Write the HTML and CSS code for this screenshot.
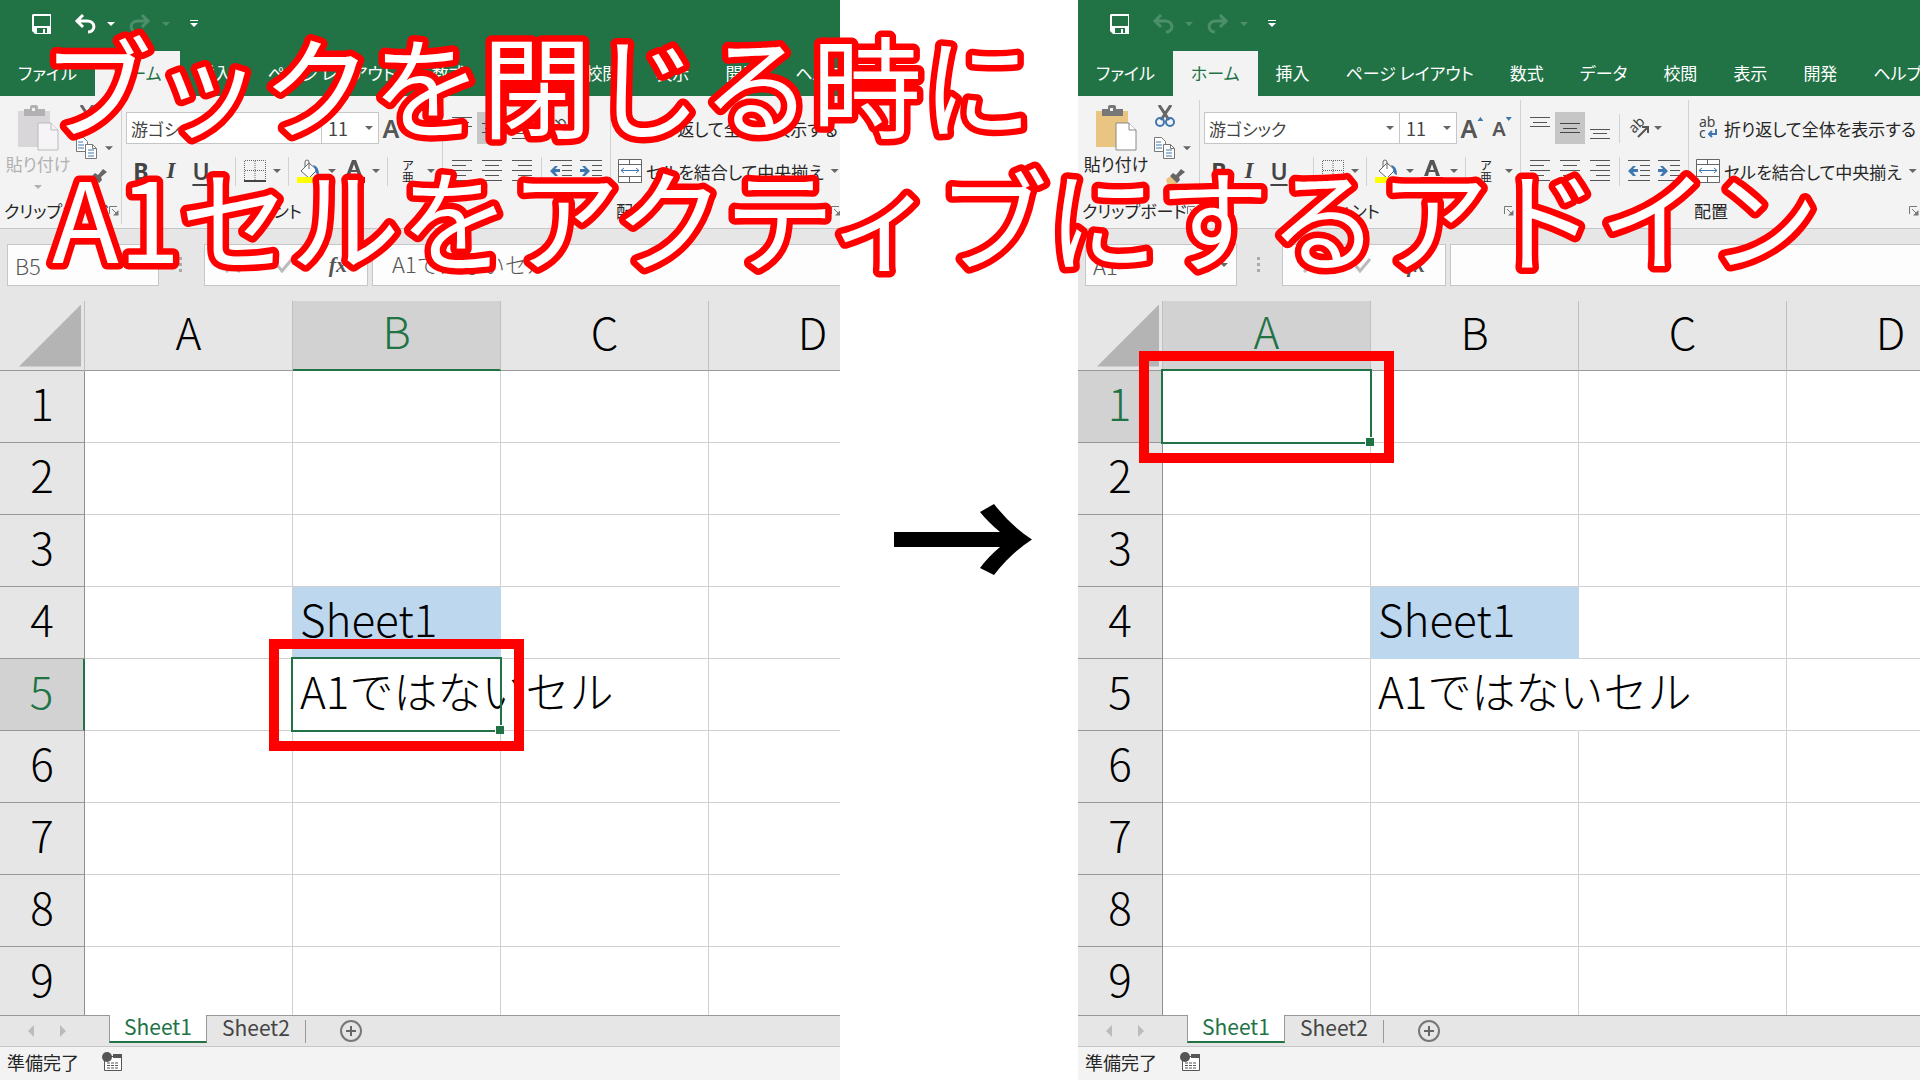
FILE: index.html
```html
<!DOCTYPE html>
<html lang="ja">
<head>
  <meta charset="UTF-8" />
  <meta name="viewport" content="width=device-width, initial-scale=1.0"/>
  <title>A1セルをアクティブにするアドイン</title>
  <link rel="stylesheet" href="styles.css">
</head>
<body>
  <svg class="sprite" aria-hidden="true">
    <symbol id="save" viewBox="0 0 20 20"><path d="M1 0h18v20H3l-3-3V1z" fill="currentColor"/><path d="M2 2h16v10H2zM5 14h10v5h-2v-4h-2v4H5z" fill="#217346"/></symbol>
    <symbol id="undo" viewBox="0 0 22 20"><path d="M2 7h11c9 0 9 11 1 11M9 1L3 7l6 6" fill="none" stroke="currentColor" stroke-width="3"/></symbol>
    <symbol id="redo" viewBox="0 0 22 20"><path d="M20 7H9c-9 0-9 11-1 11M13 1l6 6-6 6" fill="none" stroke="currentColor" stroke-width="3"/></symbol>
    <symbol id="custom" viewBox="0 0 8 8"><path d="M0 0h8v1H0zM0 3h8L4 7z" fill="currentColor"/></symbol>
    <symbol id="paste" viewBox="0 0 42 46"><path class="board" d="M1 6h32v36H1z"/><path class="clip" d="M7 4h6V2q0-2 2-2h4q2 0 2 2v2h7v7H7z"/><path d="M15 3h3v3h-3z" fill="#f3f3f3"/><path class="sheet" d="M21 18h13l7 7v20H21z"/><path class="sheet" d="M34 18v7h7"/></symbol>
    <symbol id="cut" viewBox="0 0 20 22"><path d="M4 0l10 15M16 0L6 15" stroke="#666" stroke-width="3" fill="none"/><g class="rings" fill="none" stroke-width="2"><circle cx="5" cy="17" r="4"/><circle cx="15" cy="17" r="4"/></g></symbol>
    <symbol id="copy" viewBox="0 0 21 22"><g fill="#fff" stroke="#777"><path d="M.5.5h7l4 4v10H.5z"/><path d="M9.5 7.500h7l4 4v10h-11z"/><path d="M16.500 7.500v4h4" fill="none"/></g><path d="M2 5h5M2 8h6M2 11h6M12 13h6M12 16h6M12 19h6" stroke="#3e76b0"/></symbol>
    <symbol id="painter" viewBox="0 0 20 20"><path class="bristle" d="M1 10l5-3 6 7-4 6-5-2z"/><path d="M5 7l3-3 3 2 5-6 4 3-6 5 1 3-3 3z" fill="#666"/></symbol>
    <symbol id="borders" viewBox="0 0 22 22"><path d="M.5 20V.5h21V20M11 1v19M1 10.500h20" fill="none" stroke="#666" stroke-dasharray="1 1"/><path d="M0 21h22" stroke="#444" stroke-width="2"/></symbol>
    <symbol id="fill" viewBox="0 0 24 24"><path d="M4 12l8-8 8 7-8 8z" fill="#fff" stroke="#666"/><path d="M8 8V3q0-2 2-2t2 2v7" fill="none" stroke="#666"/><path d="M16 6q6 1 6 10-4-1-4-6z" fill="#3e76b0"/><path d="M0 18h24v6H0z" fill="#ff0"/></symbol>
    <symbol id="color" viewBox="0 0 22 24"><path d="M9 1h4l6 16h-4l-1-4H8l-1 4H3zM11 5l-2 6h4z" fill="#555" fill-rule="evenodd"/><path d="M0 18h22v6H0z" fill="#e00"/></symbol>
    <symbol id="top" viewBox="0 0 20 22"><path d="M0 .5h20M3 5.500h14M0 9.500h20" stroke="#555"/></symbol>
    <symbol id="middle" viewBox="0 0 20 22"><path d="M0 6.500h20M3 11.500h14M0 15.500h20" stroke="#444"/></symbol>
    <symbol id="bottom" viewBox="0 0 20 22"><path d="M0 12.500h20M3 16.500h14M0 21.500h20" stroke="#555"/></symbol>
    <symbol id="left" viewBox="0 0 20 22"><path d="M0 .5h20M0 5.500h14M0 10.500h20M0 15.500h14M0 20.500h20" stroke="#555"/></symbol>
    <symbol id="center" viewBox="0 0 20 22"><path d="M0 .5h20M3 5.500h14M0 10.500h20M3 15.500h14M0 20.500h20" stroke="#555"/></symbol>
    <symbol id="right" viewBox="0 0 20 22"><path d="M0 .5h20M6 5.500h14M0 10.500h20M6 15.500h14M0 20.500h20" stroke="#555"/></symbol>
    <symbol id="outdent" viewBox="0 0 22 22"><path d="M0 .5h22M12 5.500h10M12 10.500h10M12 15.500h10M0 20.500h22" stroke="#555"/><path d="M0 11l5-5h3L5 9h5v3H5l3 4H5z" fill="#3e76b0"/></symbol>
    <symbol id="indent" viewBox="0 0 22 22"><path d="M0 .5h22M12 5.500h10M12 10.500h10M12 15.500h10M0 20.500h22" stroke="#555"/><path d="M10 11L5 6H2l3 3H0v3h5l-3 4h3z" fill="#3e76b0"/></symbol>
    <symbol id="orient" viewBox="0 0 22 22"><text x="0" y="0" transform="translate(6 17) rotate(-45)" class="icon-text">ab</text><path d="M10 20l9-9M14 10h6v6" fill="none" stroke="#555" stroke-width="2"/></symbol>
    <symbol id="wrap" viewBox="0 0 18 24"><text x="0" y="11" class="icon-text">ab</text><text x="0" y="22" class="icon-text">c</text><path d="M17 13v5h-6M13 15l-3 3 3 3" fill="none" stroke="#3e76b0" stroke-width="2"/></symbol>
    <symbol id="merge" viewBox="0 0 24 24"><path d="M.5.5h23v23H.5zM.5 5.500h23M.5 17.500h23M11.500 1v4M11.500 18v5" fill="#fff" stroke="#666"/><path d="M3 11.500h18M6 9l-3 2.500L6 14M18 9l3 2.500-3 2.500" fill="none" stroke="#3e76b0"/></symbol>
    <symbol id="launch" viewBox="0 0 10 10"><path d="M.5 8V.5H8M3 3l5 5" fill="none" stroke="#777"/><path d="M9.500 4v5.500H4z" fill="#777"/></symbol>
    <symbol id="record" viewBox="0 0 21 20"><path d="M2.500 4.500h17v14h-17z" fill="#fff" stroke="#555"/><path d="M11 2h9v4h-9z" fill="#555"/><circle cx="5" cy="5" r="5" fill="#555"/><path d="M5 11h12M5 13.500h12M5 16h12" stroke="#555" stroke-dasharray="3 1"/></symbol>
    <symbol id="cancel" viewBox="0 0 16 16"><path d="M1 1l14 14M15 1L1 15" stroke="#bbb" stroke-width="3"/></symbol>
    <symbol id="enter" viewBox="0 0 16 16"><path d="M1 9l4 5L15 2" fill="none" stroke="#bbb" stroke-width="3"/></symbol>
    <symbol id="plus" viewBox="0 0 22 22"><circle cx="11" cy="11" r="10" fill="none" stroke="#777" stroke-width="2"/><path d="M11 6v10M6 11h10" stroke="#666" stroke-width="2"/></symbol>
  </svg>

  <svg class="headline">
    <text x="42" y="130">ブックを閉じる時に</text>
    <text x="52" y="263">A1セルをアクティブにするアドイン</text>
  </svg>

  <main class="compare">
    <section class="book before" id="before"></section>
    <div class="arrow">
      <svg viewBox="0 0 138 72" role="img" aria-label="→"><path d="M0 28h106Q94 18 86 8L100 0q17 22 38 35.500Q117 49 100 71L86 64q8-11 20-21H0z"/></svg>
    </div>
    <section class="book after" id="after"></section>
  </main>

  <script src="script.js"></script>
</body>
</html>
```

FILE: styles.css
```css
* {
  box-sizing: border-box;
}
body {
  margin: 0;
  background: #fff;
  color: #262626;
  font-family: "Noto Sans CJK JP", "Noto Sans", sans-serif;
  font-size: 18px;
  overflow: hidden;
}
button, input, select {
  font: inherit;
  color: inherit;
  margin: 0;
  padding: 0;
  border: none;
  border-radius: 0;
  background: none;
  appearance: none;
}
button {
  display: flex;
  align-items: center;
  justify-content: center;
  flex: none;
}
svg {
  display: block;
  flex: none;
}
.sprite {
  position: absolute;
  width: 0;
  height: 0;
}
.icon-text {
  font-family: "Noto Sans", sans-serif;
  font-size: 14px;
  fill: #444;
}

/* headline over both windows */
.headline {
  position: absolute;
  z-index: 5;
  top: 0;
  left: 0;
  width: 100%;
  height: 300px;
  pointer-events: none;
}
.headline text {
  font-size: 110px;
  font-weight: 400;
  fill: #fff;
  stroke: #f00;
  stroke-width: 13px;
  stroke-linejoin: round;
  paint-order: stroke fill;
}

.compare {
  display: grid;
  grid-template-columns: 840fr 238fr 842fr;
  height: 100vh;
}
.arrow {
  display: flex;
  align-items: center;
  justify-content: center;
  padding-left: 8px;
}
.arrow svg {
  width: 60%;
}
.book {
  --board: #eac581;
  --clip: #777;
  --sheet: #fff;
  --sheet-line: #888;
  --rings: #3e76b0;
  --paste-text: #262626;
  display: flex;
  flex-direction: column;
  min-width: 0;
  overflow: hidden;
  background: #e6e6e6;
}
.before {
  --board: #d8d6d8;
  --clip: #b1b1b1;
  --sheet: #f6f4f6;
  --sheet-line: #bbb;
  --rings: #999;
  --paste-text: #b1b1b1;
}

/* title bar and tabs */
.quick {
  display: flex;
  align-items: center;
  flex: none;
  height: 51px;
  padding: 0 32px;
  padding-bottom: 3px;
  background: #217346;
  color: #fff;
}
.quick button {
  margin-right: 11px;
}
.quick .save {
  margin-right: 22px;
}
.quick .drop {
  margin-right: 14px;
}
.quick .custom {
  margin-left: 6px;
}
.quick button:disabled {
  color: #4d8f6b;
}
.tabs {
  display: flex;
  flex: none;
  height: 45px;
  background: #217346;
  color: #fff;
  font-size: 17px;
  font-feature-settings: "palt";
}
.tabs button {
  padding: 0 18px 2px;
  white-space: nowrap;
}
.tabs .active {
  background: #f3f3f3;
  color: #217346;
}

/* ribbon */
.ribbon {
  display: flex;
  flex: none;
  height: 133px;
  padding: 4px 0 0;
  background: #f3f3f3;
  border-bottom: 1px solid #c6c6c6;
  font-size: 17px;
  font-feature-settings: "palt";
}
.group {
  display: flex;
  flex-direction: column;
  flex: none;
  margin-bottom: 4px;
  border-right: 1px solid #d2d2d2;
}
.clipboard {
  width: 122px;
}
.font {
  width: 321px;
}
.align {
  width: 410px;
}
.tools {
  display: flex;
  height: 102px;
}
.paste {
  flex-direction: column;
  justify-content: flex-start;
  width: 72px;
  padding: 5px 0 0 4px;
  color: var(--paste-text);
  white-space: nowrap;
}
.paste .caret {
  margin-top: 8px;
  background: var(--paste-text);
}
.paste span {
  line-height: 26px;
}
.small-tools {
  display: flex;
  flex-direction: column;
  justify-content: space-between;
  padding: 5px 0 8px 4px;
}
.small-tools div {
  display: flex;
  align-items: center;
  gap: 8px;
}
.small-tools .cut {
  margin-right: 16px;
}
.small-tools .painter {
  margin-left: 4px;
}
.board,
.bristle {
  fill: var(--board);
}
.clip {
  fill: var(--clip);
}
.sheet {
  fill: var(--sheet);
  stroke: var(--sheet-line);
}
.rings {
  stroke: var(--rings);
}
.caret {
  width: 8px;
  height: 4px;
  flex: none;
  background: #666;
  clip-path: polygon(0 0, 100% 0, 50% 100%);
}
.quick .caret {
  background: currentColor;
}
.caption {
  display: flex;
  align-items: center;
  justify-content: space-between;
  height: 28px;
  padding: 0 6px 0 4px;
  white-space: nowrap;
}
.font .caption,
.align .caption {
  padding-left: 0;
}
.caption span {
  flex: 1;
}
.font .caption span,
.align .caption span {
  text-align: center;
}
.align .caption {
  padding-right: 11px;
}
.align .caption span {
  padding-right: 8px;
}
.rows {
  display: flex;
  flex-direction: column;
}
.row {
  display: flex;
  align-items: center;
  height: 48px;
  padding: 8px 0 0 4px;
}
.row + .row {
  height: 46px;
  padding-top: 0;
}
.row .caret {
  margin: 0 7px;
}
.picker {
  display: flex;
  align-items: center;
  height: 32px;
  background: #fff;
  border: 1px solid #c6c6c6;
  color: #444;
}
.picker + .picker {
  border-left: none;
}
.picker select {
  flex: 1;
  min-width: 0;
  height: 28px;
  padding-left: 4px;
}
.picker .caret {
  margin: 0 5px;
}
.picker-name {
  width: 196px;
}
.picker-size {
  width: 57px;
}
.picker-size select {
  padding-left: 6px;
  font-size: 18px;
}
.grow,
.shrink {
  width: 30px;
  font-family: "Noto Sans", sans-serif;
  font-weight: 600;
  color: #555;
}
.grow {
  font-size: 25px;
}
.shrink {
  font-size: 20px;
}
.grow::after,
.shrink::after {
  content: "";
  width: 6px;
  height: 4px;
  margin-bottom: 18px;
  background: #3e76b0;
  clip-path: polygon(50% 0, 100% 100%, 0 100%);
}
.shrink::after {
  clip-path: polygon(0 0, 100% 0, 50% 100%);
}
.style {
  width: 30px;
  font-family: "Noto Sans", sans-serif;
  font-size: 23px;
  font-weight: 700;
  color: #444;
}
.italic {
  font-family: "Liberation Serif", serif;
  font-style: italic;
}
.underline {
  font-weight: 600;
  text-decoration: underline;
  text-underline-offset: 4px;
  text-decoration-thickness: 2px;
}
.line {
  width: 1px;
  height: 29px;
  margin-right: 8px;
  background: #d2d2d2;
}
.underline + .line {
  margin-left: 19px;
}
.ruby {
  flex-direction: column;
  width: 24px;
  font-size: 12px;
  line-height: 12px;
}
.align .rows:first-child {
  width: 168px;
  border-right: 1px solid #d2d2d2;
}
.align .row button {
  width: 30px;
  height: 32px;
}
.align .line {
  margin: 0 4px;
}
.align .row .on {
  background: #c6c6c6;
}
.align .row .wide {
  width: auto;
  gap: 4px;
  padding-left: 3px;
  white-space: nowrap;
}
.align .row:first-child .wide svg {
  margin: 0 3px;
}
.align .rows:first-child .caret {
  margin: 0;
}

/* formula bar */
.formula {
  display: flex;
  flex: none;
  height: 72px;
  padding: 15px 0 15px 7px;
  color: #555;
  font-size: 22px;
  font-weight: 300;
}
.box {
  display: flex;
  align-items: center;
  background: #fdfdfd;
  border: 1px solid #c6c6c6;
}
.name {
  width: 152px;
}
.name input {
  flex: 1;
  min-width: 0;
  padding-left: 7px;
}
.name .caret {
  margin-right: 8px;
}
.grip {
  width: 3px;
  height: 15px;
  margin: 13px 22px 0 20px;
  background: repeating-linear-gradient(#aaa 0 3px, transparent 3px 6px);
}
.entry {
  justify-content: space-between;
  width: 164px;
  margin-right: 4px;
  padding: 0 20px;
}
.fx {
  font-family: "Liberation Serif", serif;
  font-style: italic;
  font-weight: 700;
}
.value {
  flex: 1;
  border-right: none;
}
.value input {
  width: 100%;
  padding: 0 0 5px 19px;
}

/* cells */
.sheet-area {
  flex: 1;
  min-height: 0;
  overflow: hidden;
}
.cells {
  width: 917px;
  table-layout: fixed;
  border-collapse: separate;
  border-spacing: 0;
  background: #fff;
  color: #000;
  font-size: 44px;
  font-weight: 300;
  line-height: 56px;
}
.cells th,
.cells td {
  height: 72px;
  padding: 0 0 10px;
  border-right: 1px solid #d0d0d0;
  border-bottom: 1px solid #d0d0d0;
  font-weight: 300;
}
.cells td {
  position: relative;
  padding-left: 7px;
  white-space: nowrap;
}
.cells th {
  width: 208px;
  background: #e6e6e6;
  border-color: #999;
}
.cells thead th {
  height: 70px;
  border-right-color: #c0c0c0;
}
.cells .corner {
  width: 85px;
  padding: 0;
}
.corner::after {
  content: "";
  display: block;
  width: 62px;
  height: 62px;
  margin-left: 19px;
  background: #b4b4b4;
  clip-path: polygon(100% 0, 100% 100%, 0 100%);
}
.cells tbody th {
  border-right-color: #8f8f8f;
}
.cells .picked {
  background: #d2d2d2;
  color: #217346;
}
.cells thead .picked {
  border-bottom: 2px solid #217346;
}
.cells tbody .picked {
  border-right: 2px solid #217346;
}
.cells .blue {
  background: #bdd7ee;
  border-color: #bdd7ee;
}
.cells .spill {
  border-right-color: transparent;
}
.cursor {
  position: absolute;
  z-index: 1;
  inset: -2px;
  border: 2px solid #217346;
}
.cursor::after {
  content: "";
  position: absolute;
  right: -4px;
  bottom: -4px;
  width: 8px;
  height: 8px;
  background: #217346;
  border: solid #fff;
  border-width: 1px 0 0 1px;
}
.mark {
  position: absolute;
  z-index: 2;
  inset: -20px -24px -21px -24px;
  border: 10px solid #f00;
}

/* sheet tabs and status bar */
.sheets {
  display: flex;
  flex: none;
  height: 32px;
  border-top: 1px solid #999;
  border-bottom: 1px solid #c6c6c6;
  color: #444;
  font-size: 21px;
}
.nav {
  width: 6px;
  height: 12px;
  margin: 9px 0 0 28px;
  background: #bbb;
  clip-path: polygon(100% 0, 100% 100%, 0 50%);
}
.nav.next {
  margin: 9px 43px 0 26px;
  clip-path: polygon(0 0, 100% 50%, 0 100%);
}
.sheets .tab {
  width: 98px;
  height: 27px;
  padding-bottom: 6px;
}
.sheets .current {
  margin-top: -1px;
  height: 28px;
  padding-bottom: 4px;
  background: #fff;
  border: 1px solid #999;
  border-top: none;
  border-bottom: 2px solid #217346;
  color: #217346;
}
.sheets .line {
  height: 23px;
  margin: 4px 34px 0 0;
  background: #999;
}
.status {
  display: flex;
  align-items: center;
  flex: none;
  gap: 23px;
  height: 33px;
  padding: 0 0 4px 7px;
  background: #f3f3f3;
}
```

FILE: script.js
```js
const icon = (id, w, h) => `<svg width="${w}" height="${h}"><use href="#${id}"/></svg>`;
const tool = (id, label, w, h, cls = "") => `<button type="button" class="${cls}" aria-label="${label}">${icon(id, w, h)}</button>`;
const caret = '<span class="caret"></span>';
const line = '<div class="line"></div>';
const launch = label => tool("launch", label, 10, 10);

function table(active) {
  const cols = ["A", "B", "C", "D"];
  const text = { B4: "Sheet1", B5: "A1ではないセル" };
  let html = '<table class="cells"><thead><tr><th class="corner"></th>';
  cols.forEach(c => {
    html += `<th class="${active[0] === c ? "picked" : ""}">${c}</th>`;
  });
  html += "</tr></thead><tbody>";
  for (let r = 1; r <= 9; r++) {
    html += `<tr><th class="${active[1] == r ? "picked" : ""}">${r}</th>`;
    cols.forEach(c => {
      const ref = c + r;
      const cls = ref === "B4" ? "blue" : ref === "B5" ? "spill" : "";
      const cursor = ref === active ? '<div class="cursor"></div><div class="mark"></div>' : "";
      html += `<td class="${cls}">${text[ref] || ""}${cursor}</td>`;
    });
    html += "</tr>";
  }
  return html + "</tbody></table>";
}

function book(active, value, undo) {
  const off = undo ? "" : "disabled";
  const tabs = ["ファイル", "ホーム", "挿入", "ページ レイアウト", "数式", "データ", "校閲", "表示", "開発", "ヘルプ"];
  return `
  <div class="quick">
    ${tool("save", "上書き保存", 20, 20, "save")}
    <button type="button" aria-label="元に戻す" ${off}>${icon("undo", 22, 20)}</button>
    <button type="button" class="drop" aria-label="元に戻す一覧" ${off}>${caret}</button>
    <button type="button" aria-label="やり直し" disabled>${icon("redo", 22, 20)}</button>
    <button type="button" class="drop" aria-label="やり直し一覧" disabled>${caret}</button>
    ${tool("custom", "カスタマイズ", 8, 8, "custom")}
  </div>
  <nav class="tabs">
    ${tabs.map(t => `<button type="button" class="${t === "ホーム" ? "active" : ""}">${t}</button>`).join("")}
  </nav>
  <div class="ribbon">
    <div class="group clipboard">
      <div class="tools">
        <button type="button" class="paste">${icon("paste", 42, 46)}<span>貼り付け</span>${caret}</button>
        <div class="small-tools">
          ${tool("cut", "切り取り", 20, 22, "cut")}
          <div>${tool("copy", "コピー", 21, 22)}${caret}</div>
          ${tool("painter", "書式のコピー", 20, 20, "painter")}
        </div>
      </div>
      <div class="caption"><span>クリップボード</span>${launch("クリップボード")}</div>
    </div>
    <div class="group font">
      <div class="tools"><div class="rows">
        <div class="row">
          <div class="picker picker-name"><select aria-label="フォント"><option>游ゴシック</option></select>${caret}</div>
          <div class="picker picker-size"><select aria-label="フォント サイズ"><option>11</option></select>${caret}</div>
          <button type="button" class="grow">A</button>
          <button type="button" class="shrink">A</button>
        </div>
        <div class="row">
          <button type="button" class="style">B</button>
          <button type="button" class="style italic">I</button>
          <button type="button" class="style underline">U</button>
          ${line}${tool("borders", "罫線", 22, 22)}${caret}
          ${line}${tool("fill", "塗りつぶしの色", 24, 24)}${caret}
          ${tool("color", "フォントの色", 22, 24)}${caret}
          ${line}<button type="button" class="ruby"><span>ア</span><span>亜</span></button>${caret}
        </div>
      </div></div>
      <div class="caption"><span>フォント</span>${launch("フォント")}</div>
    </div>
    <div class="group align">
      <div class="tools">
        <div class="rows">
          <div class="row">
            ${tool("top", "上揃え", 20, 22)}${tool("middle", "上下中央揃え", 20, 22, "on")}${tool("bottom", "下揃え", 20, 22)}
            ${line}${tool("orient", "方向", 22, 22)}${caret}
          </div>
          <div class="row">
            ${tool("left", "左揃え", 20, 22)}${tool("center", "中央揃え", 20, 22)}${tool("right", "右揃え", 20, 22)}
            ${line}${tool("outdent", "インデントを減らす", 22, 22)}${tool("indent", "インデントを増やす", 22, 22)}
          </div>
        </div>
        <div class="rows">
          <div class="row"><button type="button" class="wide">${icon("wrap", 18, 24)}折り返して全体を表示する</button></div>
          <div class="row"><button type="button" class="wide">${icon("merge", 24, 24)}セルを結合して中央揃え</button>${caret}</div>
        </div>
      </div>
      <div class="caption"><span>配置</span>${launch("配置")}</div>
    </div>
  </div>
  <div class="formula">
    <div class="box name"><input type="text" aria-label="名前ボックス" value="${active}">${caret}</div>
    <div class="grip"></div>
    <div class="box entry">${tool("cancel", "キャンセル", 16, 16)}${tool("enter", "入力", 16, 16)}<button type="button" class="fx">fx</button></div>
    <div class="box value"><input type="text" aria-label="数式バー" value="${value}"></div>
  </div>
  <div class="sheet-area">${table(active)}</div>
  <div class="sheets">
    <button type="button" class="nav" aria-label="前のシート"></button>
    <button type="button" class="nav next" aria-label="次のシート"></button>
    <button type="button" class="tab current">Sheet1</button>
    <button type="button" class="tab">Sheet2</button>
    ${line}${tool("plus", "新しいシート", 22, 22)}
  </div>
  <div class="status"><span>準備完了</span>${icon("record", 21, 20)}</div>`;
}

document.getElementById("before").innerHTML = book("B5", "A1ではないセル", true);
document.getElementById("after").innerHTML = book("A1", "", false);
```
